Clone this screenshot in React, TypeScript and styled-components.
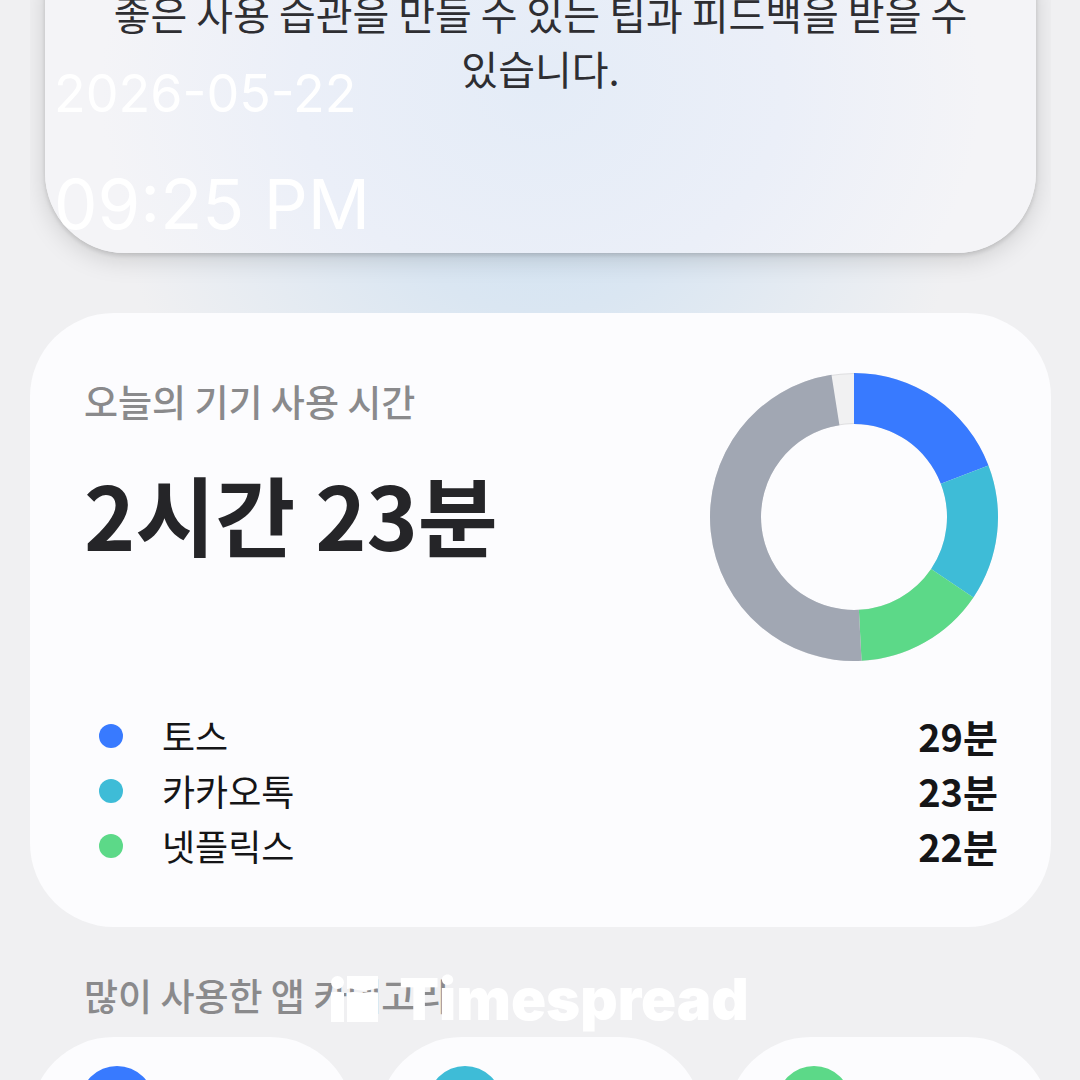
import React from "react";
import styled, { createGlobalStyle } from "styled-components";

const GlobalStyle = createGlobalStyle`
  *, *::before, *::after { box-sizing: border-box; }
  body { margin: 0; background: #f0f0f2; }
  h1, h2, p, ul { margin: 0; padding: 0; }
  ul { list-style: none; }
`;

const colors = {
  blue: "#387aff",
  cyan: "#3ebcd7",
  green: "#5cd988",
  gray: "#a1a7b3",
  rest: "#f1f1f2",
  card: "#fcfcfe",
};

const Screen = styled.div`
  position: relative;
  height: 100vh;
  overflow: hidden;
  background: #f0f0f2;
  font-family: "Noto Sans CJK KR", "Noto Sans", sans-serif;
`;

const Page = styled.main`
  display: flex;
  flex-direction: column;
  margin: 0 29px 0 30px;
  overflow: clip;
  background: radial-gradient(ellipse 420px 320px at 50% 200px, #d3e4f3 0%, #dae6f2 35%, rgba(240, 240, 242, 0) 100%);
`;

const TipCard = styled.section`
  margin: -20px 15px 60px;
  padding: 6px 60px 157px;
  border-radius: 0 0 80px 80px;
  background: radial-gradient(ellipse 440px 360px at 50% 110px, #e4ecf7 0%, #ebeff8 55%, #f4f4f7 100%);
  box-shadow: 0 6px 26px rgba(0, 0, 0, 0.15), 0 2px 5px rgba(0, 0, 0, 0.14);
`;

const TipText = styled.p`
  font-size: 40px;
  line-height: 55px;
  color: #2e2e32;
  text-align: center;
  word-break: keep-all;
`;

const UsageCard = styled.section`
  display: flex;
  flex-direction: column;
  gap: 47px;
  padding: 60px 53px 54px 54px;
  border-radius: 84px;
  background: ${colors.card};
`;

const Summary = styled.div`
  display: flex;
  justify-content: space-between;
`;

const Totals = styled.div`
  display: flex;
  flex-direction: column;
  gap: 28px;
`;

const Label = styled.h2`
  font-size: 37px;
  font-weight: 500;
  line-height: 56px;
  color: #8a8a8c;
`;

const Total = styled.p`
  font-size: 87px;
  font-weight: 700;
  line-height: 112px;
  color: #252528;
`;

const Chart = styled.svg`
  flex: none;
  width: 288px;
  height: 288px;
`;

const AppList = styled.ul`
  display: flex;
  flex-direction: column;
`;

const AppRow = styled.li`
  display: flex;
  align-items: center;
  padding-left: 15px;
  line-height: 55px;
  color: #151517;
`;

const Dot = styled.span<{ $color: string }>`
  width: 24px;
  height: 24px;
  margin-right: 39px;
  border-radius: 50%;
  background: ${(p) => p.$color};
`;

const AppName = styled.span`
  flex: 1;
  font-size: 36px;
`;

const AppTime = styled.span`
  font-size: 38px;
  font-weight: 700;
`;

const CategoryHeader = styled.header`
  padding: 40px 54px 14px;
`;

const CategoryGrid = styled.div`
  display: grid;
  grid-template-columns: repeat(3, 1fr);
  gap: 24px;
`;

const CategoryCard = styled.article`
  padding: 29px 50px 150px;
  border-radius: 84px;
  background: ${colors.card};
`;

const CategoryIcon = styled.span<{ $color: string }>`
  display: block;
  width: 74px;
  height: 74px;
  border-radius: 50%;
  background: ${(p) => p.$color};
`;

const Stamp = styled.div`
  position: absolute;
  top: 60px;
  left: 54px;
  display: flex;
  flex-direction: column;
  gap: 34px;
  font-family: Inter, sans-serif;
  color: #ffffff;
`;

const StampDate = styled.time`
  font-size: 52px;
  line-height: 68px;
`;

const StampTime = styled.time`
  font-size: 69px;
  line-height: 84px;
`;

const Brand = styled.div`
  position: absolute;
  left: 0;
  right: 0;
  bottom: 43px;
  display: flex;
  justify-content: center;
  align-items: center;
  gap: 20px;
  font-family: Inter, sans-serif;
  font-size: 58px;
  font-weight: 900;
  line-height: 76px;
  color: #ffffff;
`;

const BrandMark = styled.svg`
  width: 48px;
  height: 46px;
`;

const apps = [
  { name: "토스", time: "29분", color: colors.blue },
  { name: "카카오톡", time: "23분", color: colors.cyan },
  { name: "넷플릭스", time: "22분", color: colors.green },
];

const slices = [
  { from: 0, to: 69, color: colors.blue },
  { from: 69, to: 124, color: colors.cyan },
  { from: 124, to: 177, color: colors.green },
  { from: 177, to: 351, color: colors.gray },
];

function slicePath(from: number, to: number) {
  const point = (radius: number, deg: number) => {
    const a = (deg * Math.PI) / 180;
    return `${144 + radius * Math.sin(a)} ${144 - radius * Math.cos(a)}`;
  };
  const large = to - from > 180 ? 1 : 0;
  return `M${point(144, from)}A144 144 0 ${large} 1 ${point(144, to)}L${point(93, to)}A93 93 0 ${large} 0 ${point(93, from)}Z`;
}

function UsageChart() {
  return (
    <Chart viewBox="0 0 288 288" aria-hidden="true">
      <circle cx="144" cy="144" r="118.5" fill="none" stroke="#dedee0" strokeWidth="51" />
      <circle cx="144" cy="144" r="118.5" fill="none" stroke={colors.rest} strokeWidth="49" />
      {slices.map((s) => (
        <path key={s.from} d={slicePath(s.from, s.to)} fill={s.color} />
      ))}
    </Chart>
  );
}

export default function App() {
  return (
    <Screen>
      <GlobalStyle />
      <Page>
        <TipCard>
          <TipText>좋은 사용 습관을 만들 수 있는 팁과 피드백을 받을 수 있습니다.</TipText>
        </TipCard>
        <UsageCard>
          <Summary>
            <Totals>
              <Label>오늘의 기기 사용 시간</Label>
              <Total>2시간 23분</Total>
            </Totals>
            <UsageChart />
          </Summary>
          <AppList>
            {apps.map((app) => (
              <AppRow key={app.name}>
                <Dot $color={app.color} />
                <AppName>{app.name}</AppName>
                <AppTime>{app.time}</AppTime>
              </AppRow>
            ))}
          </AppList>
        </UsageCard>
        <CategoryHeader>
          <Label>많이 사용한 앱 카테고리</Label>
        </CategoryHeader>
        <CategoryGrid>
          {apps.map((app) => (
            <CategoryCard key={app.name}>
              <CategoryIcon $color={app.color} />
            </CategoryCard>
          ))}
        </CategoryGrid>
      </Page>
      <Stamp>
        <StampDate>2026-05-22</StampDate>
        <StampTime>09:25 PM</StampTime>
      </Stamp>
      <Brand>
        <BrandMark viewBox="0 0 48 46" fill="currentColor" aria-hidden="true">
          <circle cx="6.5" cy="6.5" r="6.5" />
          <path d="M0 16.500Q6.500 15 13 16.500V46H0Z" />
          <path d="M16 0H47V12.500Q43 12 39 14Q31 15.500 24 13.500Q20 12 16 13Z" />
          <path d="M16 16.500Q24 15.500 31 17Q40 15.500 47 16.500V46H16Z" />
        </BrandMark>
        Timespread
      </Brand>
    </Screen>
  );
}
